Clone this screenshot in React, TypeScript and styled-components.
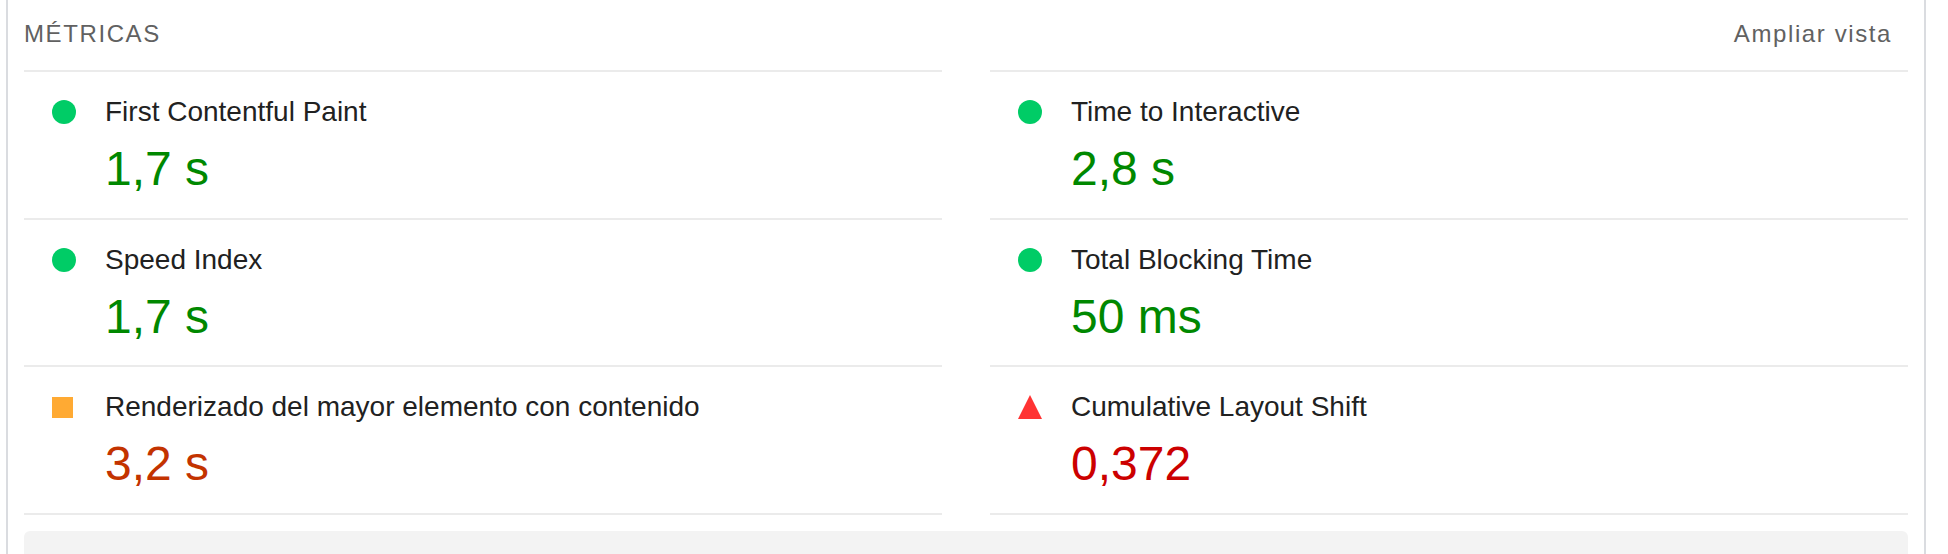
import React from "react";
import styled, { createGlobalStyle, css } from "styled-components";

type Status = "pass" | "average" | "fail";

const GlobalStyle = createGlobalStyle`
  html, body {
    margin: 0;
    padding: 0;
    background: #ffffff;
    overflow: hidden;
  }
  body {
    font-family: "Liberation Sans", Arial, Helvetica, sans-serif;
    -webkit-font-smoothing: antialiased;
  }
  * {
    box-sizing: border-box;
  }
`;

const Page = styled.div`
  padding-left: 6px;
`;

const Card = styled.section`
  width: 1920px;
  min-height: 554px;
  padding: 0 16px;
  border-left: 2px solid #dadce0;
  border-right: 2px solid #dadce0;
`;

const Header = styled.div`
  display: flex;
  justify-content: space-between;
  align-items: flex-start;
  height: 70px;
  padding-top: 18px;
`;

const HeaderLabel = styled.span`
  font-size: 24px;
  line-height: 32px;
  letter-spacing: 1.6px;
  text-transform: uppercase;
  color: #616161;
`;

const Toggle = styled.span`
  font-size: 24px;
  line-height: 32px;
  letter-spacing: 1.6px;
  color: #616161;
  padding-right: 16px;
  cursor: pointer;
`;

const MetricsGrid = styled.div`
  display: grid;
  grid-template-columns: 1fr 1fr;
  column-gap: 48px;
`;

const Metric = styled.div`
  display: grid;
  grid-template-columns: 24px 1fr;
  column-gap: 29px;
  padding: 20px 0 20.5px 28px;
  border-bottom: 2px solid #ebebeb;

  &:nth-child(-n + 2) {
    border-top: 2px solid #ebebeb;
  }
`;

const IconCell = styled.div`
  height: 40px;
  display: flex;
  align-items: center;
  justify-content: flex-start;
`;

const ScoreIcon = styled.span<{ $status: Status }>`
  display: block;
  ${({ $status }) =>
    $status === "pass"
      ? css`
          width: 24px;
          height: 24px;
          border-radius: 50%;
          background: #00cc66;
        `
      : $status === "average"
      ? css`
          width: 21px;
          height: 21px;
          background: #ffaa33;
        `
      : css`
          width: 0;
          height: 0;
          border-left: 12px solid transparent;
          border-right: 12px solid transparent;
          border-bottom: 24px solid #ff3333;
        `}
`;

const Title = styled.div`
  font-size: 28px;
  line-height: 40px;
  color: #212121;
  white-space: nowrap;
`;

const valueColors: Record<Status, string> = {
  pass: "#008800",
  average: "#c33300",
  fail: "#cc0000",
};

const Value = styled.div<{ $status: Status }>`
  grid-column: 2;
  margin-top: 9px;
  font-size: 48px;
  line-height: 56px;
  color: ${({ $status }) => valueColors[$status]};
`;

const Footer = styled.div`
  margin-top: 16px;
  height: 60px;
  background: #f3f3f3;
  border-radius: 6px;
`;

const metrics: { title: string; value: string; status: Status }[] = [
  { title: "First Contentful Paint", value: "1,7 s", status: "pass" },
  { title: "Time to Interactive", value: "2,8 s", status: "pass" },
  { title: "Speed Index", value: "1,7 s", status: "pass" },
  { title: "Total Blocking Time", value: "50 ms", status: "pass" },
  {
    title: "Renderizado del mayor elemento con contenido",
    value: "3,2 s",
    status: "average",
  },
  { title: "Cumulative Layout Shift", value: "0,372", status: "fail" },
];

export default function App() {
  return (
    <Page>
      <GlobalStyle />
      <Card>
        <Header>
          <HeaderLabel>Métricas</HeaderLabel>
          <Toggle>Ampliar vista</Toggle>
        </Header>
        <MetricsGrid>
          {metrics.map((m) => (
            <Metric key={m.title}>
              <IconCell>
                <ScoreIcon $status={m.status} />
              </IconCell>
              <Title>{m.title}</Title>
              <Value $status={m.status}>{m.value}</Value>
            </Metric>
          ))}
        </MetricsGrid>
        <Footer />
      </Card>
    </Page>
  );
}
